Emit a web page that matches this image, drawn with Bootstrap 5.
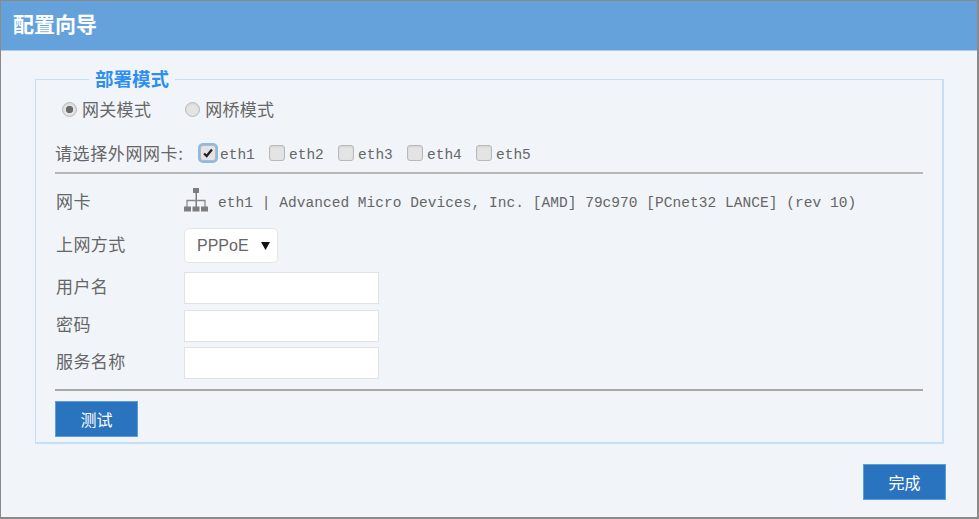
<!DOCTYPE html>
<html lang="zh-CN">
<head>
<meta charset="utf-8">
<title>配置向导</title>
<link rel="stylesheet" href="https://cdn.jsdelivr.net/npm/bootstrap@5.3.0/dist/css/bootstrap.min.css">
<style>
html,body{height:100%;}
body{font-family:"Noto Sans CJK SC","Liberation Sans",sans-serif;background:#f1f5fa;color:#666;font-size:17px;overflow:hidden;}
.wiz-frame{width:979px;height:519px;border:solid #8a8a8a;border-width:1px 2px 2px 1px;background:#f1f5fa;}
.wiz-head{height:50px;background:#65a2dc;color:#fff;font-size:21px;font-weight:700;padding-left:12px;border-bottom:1px solid #a9cdf0;line-height:44px;}
.wiz-body{padding:15px 33px 0 34px;}
.wiz-set{border:1px solid #c3e0f7;border-width:1px 2px 2px 1px;height:378px;padding:0 19px;margin:0;min-width:0;}
.wiz-set legend{float:none;width:auto;font-size:18.500px;font-weight:700;color:#2e8fef;margin:0 0 0 34px;padding:0 6px 2px 6px;line-height:24px;}
.wiz-radios{height:24px;margin-top:5px;padding-left:7px;gap:34px;}
.wiz-radios label{display:flex;align-items:center;gap:5px;letter-spacing:.3px;}
.wiz-nics{height:26px;margin-top:19px;}
.wiz-nics .lead-lbl{width:145px;flex:none;letter-spacing:.6px;white-space:nowrap;}
.wiz-nics label{display:flex;align-items:center;width:69px;font:14.5px "Liberation Mono",monospace;}
.wiz-nics label span{position:relative;top:2px;margin-left:4px;}
.wiz-set .form-check-input{margin:0;flex:none;background-color:#e4e4e4;border:1px solid #b9b9b9;box-shadow:inset 0 1px 2px rgba(0,0,0,.08);}
.wiz-set input[type=radio]{width:15px;height:15px;}
.wiz-set input[type=checkbox]{width:16px;height:16px;border-radius:3px;}
.wiz-set input[type=radio]:checked{background-image:radial-gradient(circle,#6a6a6a 0 3.4px,transparent 4px);}
.wiz-set input[type=checkbox]:checked{background-image:url("data:image/svg+xml,%3Csvg xmlns='http://www.w3.org/2000/svg' viewBox='0 0 16 16'%3E%3Cpath d='M3.5 8.5l3 3 6-7.5' fill='none' stroke='%23222' stroke-width='2.6'/%3E%3C/svg%3E");box-shadow:0 0 0 2px #8db9ea;}
.wiz-rule{height:2px;background:#b7b7b7;opacity:1;border:0;margin:6px 0 0;}
.wiz-rule.second{height:2px;background:#aaa8a3;margin:10px 0 0;}
.wiz-row{display:flex;align-items:center;}
.wiz-row .row-lbl{width:129px;flex:none;padding-left:1px;padding-bottom:4px;letter-spacing:.4px;}
.wiz-nicinfo{height:54px;padding-top:4px;}
.wiz-nicinfo svg{margin-right:10px;position:relative;top:-3px;}
.wiz-desc{font:14.5px "Liberation Mono",monospace;white-space:pre;letter-spacing:.04px;}
.wiz-sel{width:94px;height:35px;border:1px solid #e6e6e6;border-radius:5px;background-color:#fff;padding:0 0 0 12px;font:16px "Liberation Sans",sans-serif;color:#666;background-position:right 7px center;background-size:9px 8px;background-image:url("data:image/svg+xml,%3Csvg xmlns='http://www.w3.org/2000/svg' viewBox='0 0 9 8'%3E%3Cpath d='M0 0h9L4.500 8z' fill='%23111'/%3E%3C/svg%3E");}
.wiz-in{width:195px;height:32px;border:1px solid #e2e2e2;border-radius:0;background:#fff;padding:0 8px;}
.wiz-sec{margin-bottom:5.500px;}
.wiz-selrow{margin-bottom:9px;}
.wiz-btn{width:83px;height:36px;border-radius:0;background:#2a73bf;border:1px solid #5b9ddd;color:#fff;font-size:16px;padding:0;}
.wiz-btn:hover{background:#2a73bf;color:#fff;}
.wiz-btn-gap{margin-top:10px;}
.wiz-foot{display:flex;justify-content:flex-end;padding:20px 0 0;margin-right:-2px;}
</style>
</head>
<body>
<div class="wiz-frame">
  <div class="wiz-head">配置向导</div>
  <div class="wiz-body">
    <fieldset class="wiz-set">
      <legend>部署模式</legend>
      <div class="wiz-radios d-flex align-items-center">
        <label><input class="form-check-input" type="radio" name="mode" checked>网关模式</label>
        <label><input class="form-check-input" type="radio" name="mode">网桥模式</label>
      </div>
      <div class="wiz-nics d-flex align-items-center">
        <div class="lead-lbl">请选择外网网卡:</div>
        <label><input class="form-check-input" type="checkbox" checked><span>eth1</span></label>
        <label><input class="form-check-input" type="checkbox"><span>eth2</span></label>
        <label><input class="form-check-input" type="checkbox"><span>eth3</span></label>
        <label><input class="form-check-input" type="checkbox"><span>eth4</span></label>
        <label><input class="form-check-input" type="checkbox"><span>eth5</span></label>
      </div>
      <hr class="wiz-rule">
      <div class="wiz-row wiz-nicinfo">
        <div class="row-lbl">网卡</div>
        <svg width="24" height="24" viewBox="0 0 24 24" fill="#7d7d7d"><rect x="9" y="0" width="6" height="5"/><rect x="11.500" y="4" width="1.500" height="15"/><path d="M3 19v-6.500h18V19" fill="none" stroke="#8a8a8a" stroke-width="1.300"/><rect x="0" y="18.500" width="7" height="5"/><rect x="8.500" y="18.500" width="7" height="5"/><rect x="17" y="18.500" width="7" height="5"/></svg>
        <div class="wiz-desc">eth1 | Advanced Micro Devices, Inc. [AMD] 79c970 [PCnet32 LANCE] (rev 10)</div>
      </div>
      <div class="wiz-row wiz-selrow">
        <div class="row-lbl">上网方式</div>
        <select class="form-select wiz-sel"><option>PPPoE</option></select>
      </div>
      <div class="wiz-row wiz-sec">
        <div class="row-lbl">用户名</div>
        <input class="form-control wiz-in" type="text">
      </div>
      <div class="wiz-row wiz-sec">
        <div class="row-lbl">密码</div>
        <input class="form-control wiz-in" type="password">
      </div>
      <div class="wiz-row">
        <div class="row-lbl">服务名称</div>
        <input class="form-control wiz-in" type="text">
      </div>
      <hr class="wiz-rule second">
      <button type="button" class="btn wiz-btn wiz-btn-gap d-block">测试</button>
    </fieldset>
    <div class="wiz-foot"><button type="button" class="btn wiz-btn">完成</button></div>
  </div>
</div>
<script src="https://cdn.jsdelivr.net/npm/bootstrap@5.3.0/dist/js/bootstrap.bundle.min.js"></script>
</body>
</html>
